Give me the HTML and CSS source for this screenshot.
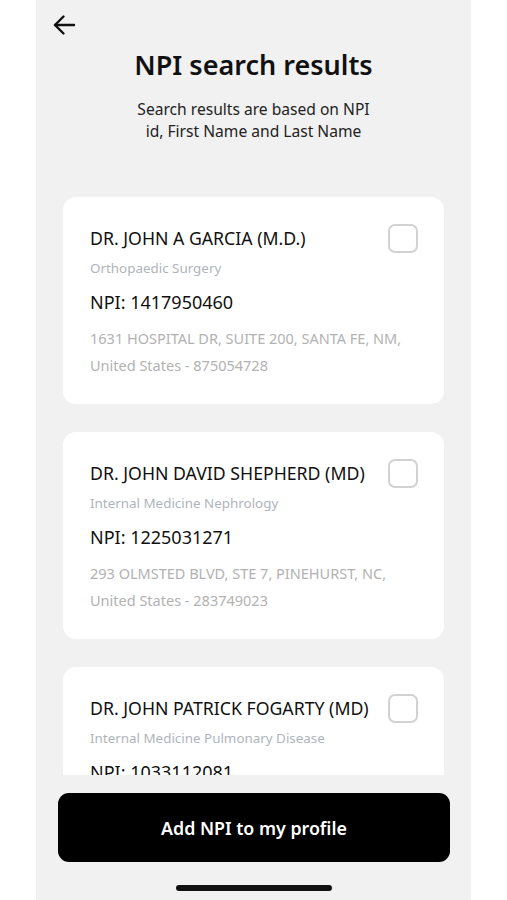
FILE: index.html
```html
<!DOCTYPE html>
<html lang="en">
<head>
  <meta charset="UTF-8">
  <title>NPI search results</title>
  <link rel="stylesheet" href="styles.css">
</head>
<body>
  <div class="screen">
    <!-- Header with back arrow and title -->
    <div class="header">
      <button class="backButton" aria-label="Back">
        <svg width="24" height="24" viewBox="0 0 24 24" fill="none" stroke="#111" stroke-width="2.4" stroke-linecap="round" stroke-linejoin="round">
          <path d="M22 12H3"/>
          <path d="M11.5 3.5L3 12l8.5 8.5"/>
        </svg>
      </button>
      <h1 class="title">NPI search results</h1>
      <p class="subtitle">Search results are based on NPI id, First Name and Last Name</p>
    </div>

    <div class="resultList">
      <div class="resultCard">
        <div class="cardHead">
          <div class="doctorName">DR. JOHN A GARCIA (M.D.)</div>
          <span class="checkBox"></span>
        </div>
        <div class="specialty">Orthopaedic Surgery</div>
        <div class="npiNumber">NPI: 1417950460</div>
        <div class="address">1631 HOSPITAL DR, SUITE 200, SANTA FE, NM, United States - 875054728</div>
      </div>

      <div class="resultCard">
        <div class="cardHead">
          <div class="doctorName">DR. JOHN DAVID SHEPHERD (MD)</div>
          <span class="checkBox"></span>
        </div>
        <div class="specialty">Internal Medicine Nephrology</div>
        <div class="npiNumber">NPI: 1225031271</div>
        <div class="address">293 OLMSTED BLVD, STE 7, PINEHURST, NC, United States - 283749023</div>
      </div>

      <div class="resultCard">
        <div class="cardHead">
          <div class="doctorName">DR. JOHN PATRICK FOGARTY (MD)</div>
          <span class="checkBox"></span>
        </div>
        <div class="specialty">Internal Medicine Pulmonary Disease</div>
        <div class="npiNumber">NPI: 1033112081</div>
      </div>
    </div>

    <!-- Bottom action -->
    <div class="footer">
      <button class="addButton">Add NPI to my profile</button>
      <div class="homeBar"></div>
    </div>
  </div>
</body>
</html>
```

FILE: styles.css
```css
/* Basic styling */
body {
  margin: 0;
  background: #ffffff;
  font-family: "Noto Sans", "Open Sans", sans-serif;
  color: #111111;
}
.screen {
  width: 435px;
  height: 900px;
  margin: 0 auto;
  background: #f1f1f1;
  display: flex;
  flex-direction: column;
  overflow: hidden;
}

/* Header */
.header {
  padding: 13px 16px 0 16px;
  display: flex;
  flex-direction: column;
  align-items: center;
}
.backButton {
  align-self: flex-start;
  width: 24px;
  height: 24px;
  padding: 0;
  margin: 0;
  border: none;
  background: none;
  cursor: pointer;
}
.backButton svg {
  display: block;
}
.title {
  margin: 11px 0 0 0;
  font-size: 27px;
  line-height: 34px;
  font-weight: 600;
  color: #111111;
}
.subtitle {
  margin: 16px 0 0 0;
  max-width: 250px;
  font-size: 15.6px;
  line-height: 22px;
  text-align: center;
  color: #222222;
}

/* Result cards */
.resultList {
  flex: 1;
  overflow: hidden;
  padding: 55px 27px 0 27px;
}
.resultCard {
  background: #ffffff;
  border-radius: 13px;
  padding: 26px 26px 25px 27px;
  margin-bottom: 28px;
}
.cardHead {
  display: flex;
  align-items: center;
  gap: 10px;
  height: 30px;
}
.doctorName {
  flex: 1;
  font-size: 17.7px;
  line-height: 24px;
  white-space: nowrap;
}
.checkBox {
  width: 26px;
  height: 25px;
  border: 2px solid #d2d2d2;
  border-radius: 7px;
  flex-shrink: 0;
}
.specialty {
  margin-top: 6px;
  font-size: 13.4px;
  line-height: 18px;
  color: #afb4bc;
}
.npiNumber {
  margin-top: 13px;
  font-size: 18px;
  line-height: 24px;
}
.address {
  margin-top: 11px;
  font-size: 14.5px;
  line-height: 27px;
  color: #b2b2b2;
}

/* Footer */
.footer {
  height: 125px;
  padding: 18px 21px 0 22px;
  box-sizing: border-box;
  display: flex;
  flex-direction: column;
  align-items: center;
}
.addButton {
  width: 100%;
  height: 69px;
  flex-shrink: 0;
  border: none;
  border-radius: 11px;
  background: #000000;
  color: #ffffff;
  font-family: "Noto Sans", "Open Sans", sans-serif;
  font-size: 17.8px;
  font-weight: 600;
  cursor: pointer;
}
.homeBar {
  margin-top: 23px;
  width: 156px;
  height: 6px;
  flex-shrink: 0;
  border-radius: 3px;
  background: #111111;
}
```
